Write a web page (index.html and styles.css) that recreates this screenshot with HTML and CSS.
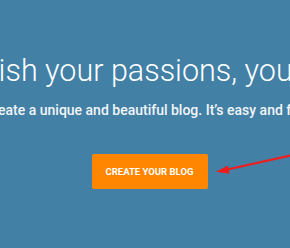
FILE: index.html
```html
<!DOCTYPE html>
<html lang="en">
<head>
    <meta charset="UTF-8">
    <meta name="viewport" content="width=device-width, initial-scale=1.0">
    <title>Blogger</title>
    <link rel="stylesheet" href="styles.css">
</head>
<body>
    <main class="hero">
        <h1 class="hero-title">Publish your passions, your way.</h1>
        <p class="hero-text">Create a unique and beautiful blog. It’s easy and free.</p>
        <a class="cta" href="#">CREATE YOUR BLOG</a>
        <!-- red annotation arrow pointing at the button -->
        <svg class="arrow" width="290" height="248" viewBox="0 0 290 248">
            <line x1="292" y1="155.3" x2="224" y2="170.2" stroke="#f21b1b" stroke-width="2.2"/>
            <polygon points="216,171.8 228,165.6 229.4,173.8" fill="#f21b1b"/>
        </svg>
    </main>
</body>
</html>
```

FILE: styles.css
```css
html, body {
    margin: 0;
    padding: 0;
}

body {
    font-family: Roboto, "Liberation Sans", sans-serif;
    background-color: #4280a6;
    overflow: hidden;
}

.hero {
    position: relative;
    width: 290px;
    height: 248px;
    padding: 55px 0 0 9px;
    box-sizing: border-box;
    display: flex;
    flex-direction: column;
    align-items: center;
    color: #ffffff;
}

.hero-title {
    margin: 0 0 0 10px;
    font-size: 30.5px;
    line-height: 32px;
    font-weight: 300;
    white-space: nowrap;
}

.hero-text {
    margin: 13px 0 0;
    font-size: 14px;
    line-height: 20px;
    font-weight: 500;
    white-space: nowrap;
    color: #f2f5f8;
}

.cta {
    margin-top: 34px;
    height: 35px;
    padding: 0 14px;
    display: flex;
    align-items: center;
    background-color: #ff8600;
    border-radius: 2px;
    color: #ffffff;
    font-size: 9.5px;
    font-weight: 700;
    text-decoration: none;
}

.arrow {
    position: absolute;
    top: 0;
    left: 0;
}
```
